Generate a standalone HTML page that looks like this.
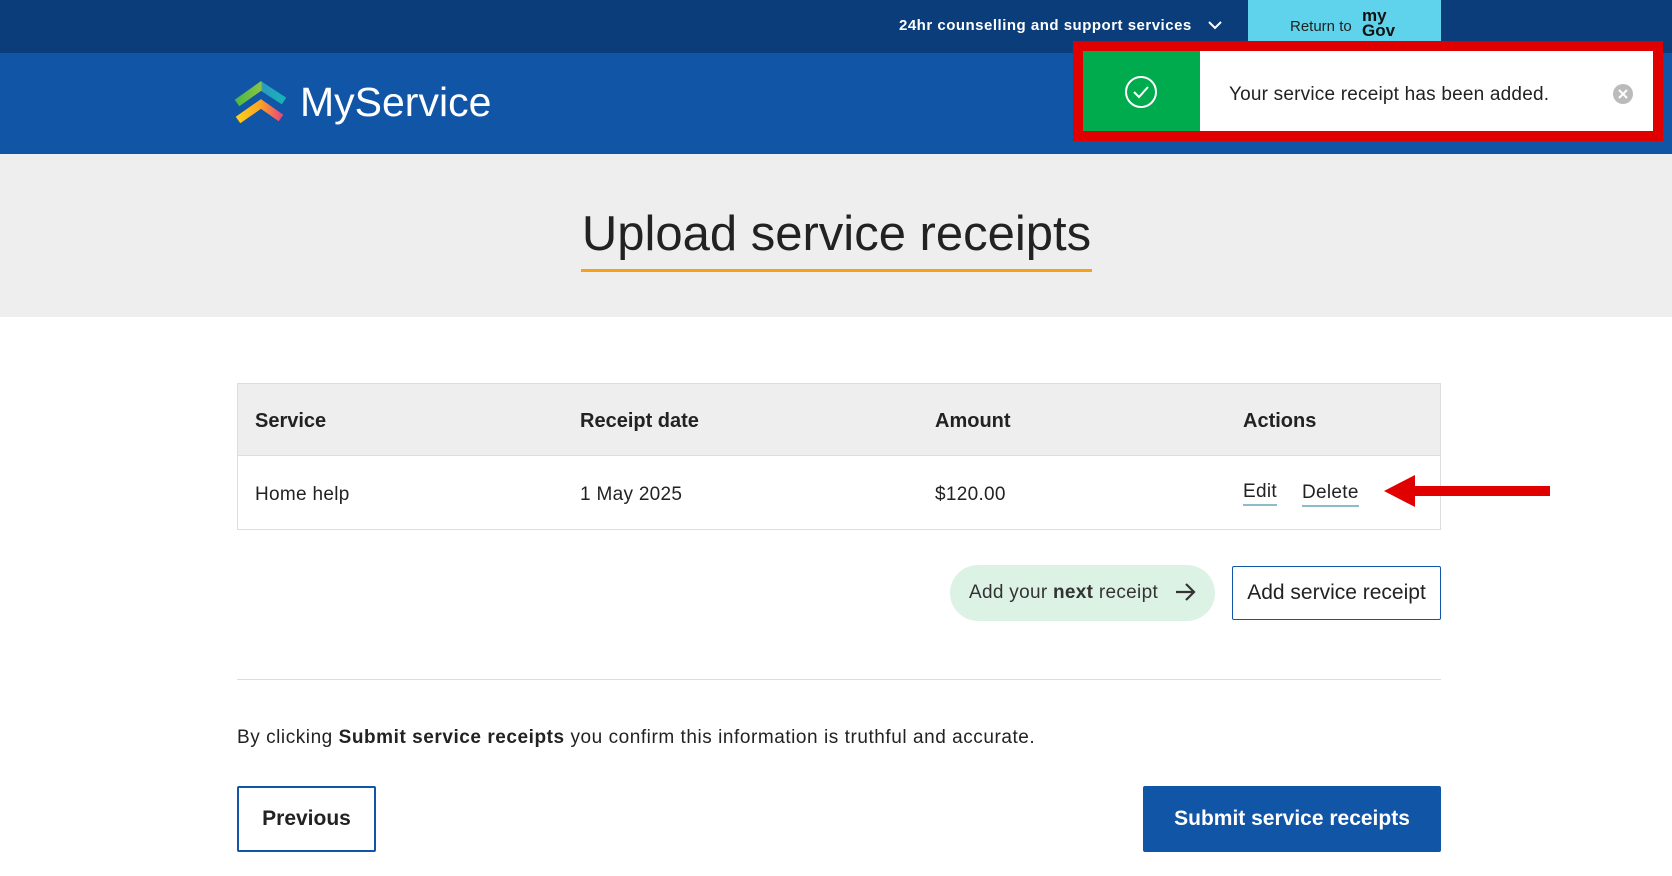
<!DOCTYPE html>
<html><head><meta charset="utf-8"><style>
*{margin:0;padding:0;box-sizing:border-box}
body{width:1672px;height:876px;overflow:hidden;font-family:"Liberation Sans",sans-serif;background:#fff;position:relative;color:#222}
.a{position:absolute}
</style></head><body>
<div class="a" style="left:0;top:0;width:1672px;height:53px;background:#0a3d7a"></div>
<div class="a" style="left:899px;top:17px;color:#fff;font-weight:bold;font-size:15px;letter-spacing:0.5px">24hr counselling and support services</div>
<svg class="a" style="left:1207px;top:19px" width="16" height="12"><path d="M2 3 L8 9 L14 3" stroke="#fff" stroke-width="2" fill="none"/></svg>
<div class="a" style="left:1248px;top:0;width:193px;height:54px;background:#5fd3ec;border-radius:0 0 4px 4px"></div>
<div class="a" style="left:1290px;top:18px;font-size:15px;color:#222">Return to</div>
<div class="a" style="left:1362px;top:8px;font-size:17px;font-weight:bold;line-height:15px;color:#111">my<br>Gov</div>
<div class="a" style="left:0;top:53px;width:1672px;height:101px;background:#1155a6"></div>
<svg class="a" style="left:230px;top:78px" width="62" height="52">
<defs><linearGradient id="g1" x1="0" x2="1"><stop offset="0" stop-color="#4cb848"/><stop offset="0.5" stop-color="#8bc540"/><stop offset="0.55" stop-color="#2a9bc0"/><stop offset="1" stop-color="#17b3b6"/></linearGradient>
<linearGradient id="g2" x1="0" x2="1"><stop offset="0" stop-color="#fbcd1a"/><stop offset="0.5" stop-color="#fba624"/><stop offset="1" stop-color="#ea4a7a"/></linearGradient></defs>
<path d="M7 25 L31 8 L54 23" stroke="url(#g1)" stroke-width="8" fill="none"/>
<path d="M8 42 L31 26 L51 40" stroke="url(#g2)" stroke-width="8" fill="none"/>
</svg>
<div class="a" style="left:300px;top:79px;color:#fff;font-size:41px">MyService</div>
<div class="a" style="left:0;top:154px;width:1672px;height:163px;background:#eeeeee"></div>
<div class="a" style="left:0;top:206px;width:1672px;text-align:center;font-size:49px;color:#222;padding-left:1px">Upload service receipts</div>
<div class="a" style="left:581px;top:269px;width:511px;height:3px;background:#f7a11a"></div>
<div class="a" style="left:237px;top:383px;width:1204px;height:147px;border:1px solid #ddd"></div>
<div class="a" style="left:238px;top:384px;width:1202px;height:72px;background:#eeeeee;border-bottom:1px solid #ddd"></div>
<div class="a" style="top:410px;left:255px;font-weight:bold;font-size:20px">Service</div>
<div class="a" style="top:410px;left:580px;font-weight:bold;font-size:20px">Receipt date</div>
<div class="a" style="top:410px;left:935px;font-weight:bold;font-size:20px">Amount</div>
<div class="a" style="top:410px;left:1243px;font-weight:bold;font-size:20px">Actions</div>
<div class="a" style="top:484px;left:255px;font-size:19px;letter-spacing:0.3px">Home help</div>
<div class="a" style="top:484px;left:580px;font-size:19px;letter-spacing:0.3px">1 May 2025</div>
<div class="a" style="top:484px;left:935px;font-size:19px;letter-spacing:0.3px">$120.00</div>
<div class="a" style="top:481px;left:1243px;font-size:19px;border-bottom:2px solid #8bbcc7;padding-bottom:1px;letter-spacing:0.3px">Edit</div>
<div class="a" style="top:482px;left:1302px;font-size:19px;border-bottom:2px solid #8bbcc7;padding-bottom:1px;letter-spacing:0.3px">Delete</div>
<svg class="a" style="left:1380px;top:472px" width="175" height="40"><path d="M4 19 L35 3 L35 14 L170 14 L170 24 L35 24 L35 35 Z" fill="#e00000"/></svg>
<div class="a" style="left:950px;top:565px;width:265px;height:56px;background:#dcf2e4;border-radius:28px;font-size:19px;line-height:56px;padding-left:19px;color:#333;letter-spacing:0.3px">Add your <b>next</b> receipt</div>
<svg class="a" style="left:1174px;top:581px" width="24" height="22"><path d="M2 11 H20 M12 3 L20 11 L12 19" stroke="#333" stroke-width="2.2" fill="none"/></svg>
<div class="a" style="left:1232px;top:566px;width:209px;height:54px;border:1px solid #1155a6;border-radius:2px;font-size:21px;line-height:52px;text-align:center">Add service receipt</div>
<div class="a" style="left:237px;top:679px;width:1204px;height:1px;background:#ddd"></div>
<div class="a" style="left:237px;top:727px;font-size:19px;letter-spacing:0.55px">By clicking <b>Submit service receipts</b> you confirm this information is truthful and accurate.</div>
<div class="a" style="left:237px;top:786px;width:139px;height:66px;border:2px solid #1155a6;border-radius:2px;font-size:21px;font-weight:bold;line-height:62px;text-align:center">Previous</div>
<div class="a" style="left:1143px;top:786px;width:298px;height:66px;background:#1155a6;border-radius:2px;font-size:21px;font-weight:bold;line-height:66px;text-align:center;color:#fff">Submit service receipts</div>
<div class="a" style="left:1073px;top:41px;width:590px;height:100px;border:10px solid #e00000;background:#fff"></div>
<div class="a" style="left:1083px;top:51px;width:117px;height:80px;background:#00ab4e"></div>
<svg class="a" style="left:1124px;top:75px" width="34" height="34"><circle cx="17" cy="17" r="15" stroke="#fff" stroke-width="2" fill="none"/><path d="M10 17 L15 22 L24 12" stroke="#fff" stroke-width="2" fill="none"/></svg>
<div class="a" style="left:1229px;top:84px;font-size:19px;color:#222;letter-spacing:0.2px">Your service receipt has been added.</div>
<svg class="a" style="left:1612px;top:83px" width="22" height="22"><circle cx="11" cy="11" r="10" fill="#bbb"/><path d="M7 7 L15 15 M15 7 L7 15" stroke="#fff" stroke-width="2"/></svg>
</body></html>
